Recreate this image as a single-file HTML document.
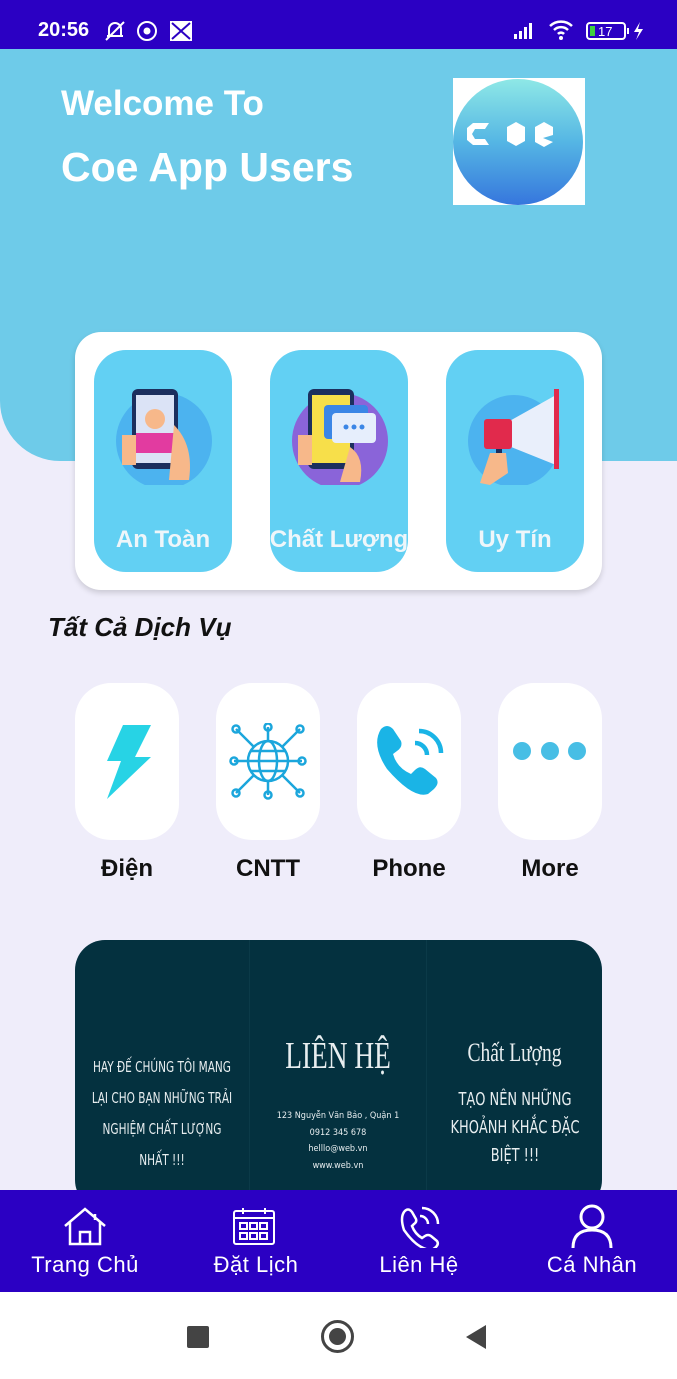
<!DOCTYPE html>
<html><head><meta charset="utf-8"><style>
*{margin:0;padding:0;box-sizing:border-box}
body{width:677px;height:1379px;background:#efedfa;font-family:"Liberation Sans","Noto Sans CJK SC",sans-serif;position:relative;overflow:hidden}
.abs{position:absolute}
.sb{left:0;top:0;width:677px;height:49px;background:#2b00c3;color:#fff}
.hdr{left:0;top:49px;width:677px;height:412px;background:#6ecbe9;border-bottom-left-radius:60px}
.card{left:75px;top:332px;width:527px;height:258px;background:#fff;border-radius:26px;box-shadow:0 3px 6px rgba(0,0,0,.15)}
.tile{top:350px;width:138px;height:222px;background:#62d0f3;border-radius:32px;color:#eef6fa;font-weight:bold;font-size:24px;text-align:center}
.tile span{position:absolute;left:-10px;right:-10px;top:176px}
.svc{top:683px;width:104px;height:157px;background:#fff;border-radius:36px}
.lbl{top:855px;width:140px;text-align:center;font-weight:bold;font-size:24px;color:#111}
.ban{left:75px;top:940px;width:527px;height:270px;background:#04313f;border-radius:30px;overflow:hidden;color:#e8eef0;font-family:"DejaVu Sans Condensed","Liberation Sans Narrow",sans-serif;text-align:center}
.nav{left:0;top:1190px;width:677px;height:102px;background:#2b00c3;color:#fff;font-size:22px}
.nav div{position:absolute;top:62px;width:170px;text-align:center;letter-spacing:.5px}
.sys{left:0;top:1292px;width:677px;height:87px;background:#fff}
</style></head><body>
<div class="abs sb">
 <div class="abs" style="left:38px;top:19px;font-size:20px;font-weight:bold">20:56</div>
 <svg class="abs" style="left:102px;top:19px" width="96" height="24"><g fill="none" stroke="#fff" stroke-width="2"><path d="M5 17h16M7 17V10a6 6 0 0 1 12 0v7M4 21L22 3"/><circle cx="45" cy="12" r="9"/></g><circle cx="45" cy="12" r="3.5" fill="#fff"/><rect x="68" y="2" width="22" height="20" fill="#fff"/><path d="M70 4l9 8-9 8M88 4l-9 8 9 8" stroke="#2b00c3" stroke-width="2" fill="none"/></svg>
 <svg class="abs" style="left:512px;top:20px" width="140" height="22"><g fill="#fff"><rect x="2" y="14" width="3" height="5"/><rect x="7" y="11" width="3" height="8"/><rect x="12" y="7" width="3" height="12"/><rect x="17" y="3" width="3" height="16"/></g><path d="M38 6a16 16 0 0 1 22 0M42 10a10 10 0 0 1 14 0M46 14a4 4 0 0 1 6 0" stroke="#fff" stroke-width="2.5" fill="none"/><circle cx="49" cy="18" r="2" fill="#fff"/><rect x="75" y="3" width="38" height="16" rx="3" stroke="#fff" stroke-width="2" fill="none"/><rect x="78" y="6" width="5" height="10" fill="#3fcf3f"/><text x="86" y="16" fill="#fff" font-size="13" font-family="Liberation Sans">17</text><rect x="115" y="8" width="2" height="6" fill="#fff"/><path d="M128 2l-6 10h5l-3 8 7-11h-5z" fill="#fff"/></svg>
</div>
<div class="abs hdr"></div>
<div class="abs" style="left:61px;top:84px;color:#fff;font-weight:bold;font-size:35px">Welcome To</div>
<div class="abs" style="left:61px;top:144px;color:#fff;font-weight:bold;font-size:41px">Coe App Users</div>
<div class="abs" style="left:453px;top:78px;width:132px;height:127px;background:#fff">
<svg width="132" height="127"><defs><linearGradient id="g" x1="0" y1="0" x2="0" y2="1"><stop offset="0" stop-color="#8ee8e6"/><stop offset=".5" stop-color="#55b6e4"/><stop offset="1" stop-color="#3676dd"/></linearGradient></defs><ellipse cx="65" cy="64" rx="65" ry="63" fill="url(#g)"/><path d="M14 50l6-5h16l-4 6h-10l-3 5 3 5h10l4 6H20l-6-5z" fill="#fff"/><path d="M54 49l9-5 9 5v14l-9 5-9-5z" fill="#fff"/><path d="M82 49l9-5 9 5v8l-10 3 10 4-9 5-9-5z" fill="#fff"/></svg></div>
<div class="abs card"></div>
<div class="abs tile" style="left:94px"><svg class="abs" style="left:20px;top:35px" width="100" height="100"><circle cx="50" cy="56" r="48" fill="#4cb3ef"/><rect x="18" y="4" width="46" height="80" rx="6" fill="#1c2f5e"/><rect x="22" y="10" width="38" height="68" fill="#dbe3f6"/><rect x="22" y="48" width="38" height="20" fill="#e23ba0"/><circle cx="41" cy="34" r="10" fill="#f7b88a"/><path d="M60 40q20 20 15 55h-20z" fill="#f7b88a"/><path d="M8 50h14v30H8z" fill="#f7b88a"/></svg><span>An Toàn</span></div>
<div class="abs tile" style="left:270px"><svg class="abs" style="left:20px;top:35px" width="100" height="100"><circle cx="50" cy="56" r="48" fill="#8a64d9"/><rect x="18" y="4" width="46" height="80" rx="6" fill="#1c2f5e"/><rect x="22" y="10" width="38" height="68" fill="#f7df4a"/><rect x="34" y="20" width="44" height="34" rx="4" fill="#3b86e6"/><rect x="42" y="28" width="44" height="30" rx="4" fill="#e6eefc"/><circle cx="56" cy="42" r="2.5" fill="#3b86e6"/><circle cx="64" cy="42" r="2.5" fill="#3b86e6"/><circle cx="72" cy="42" r="2.5" fill="#3b86e6"/><path d="M60 62q15 10 10 35h-20z" fill="#f7b88a"/><path d="M8 50h14v30H8z" fill="#f7b88a"/></svg><span>Chất Lượng</span></div>
<div class="abs tile" style="left:446px"><svg class="abs" style="left:20px;top:35px" width="100" height="100"><circle cx="48" cy="56" r="46" fill="#4cb3ef"/><path d="M40 38L90 10v70L40 60z" fill="#e9effb"/><rect x="18" y="34" width="28" height="30" rx="3" fill="#e12a4c"/><rect x="88" y="4" width="5" height="80" fill="#e12a4c"/><rect x="30" y="64" width="6" height="25" fill="#1c2f5e"/><path d="M14 98l10-30h16l2 20-18 12z" fill="#f7b88a"/></svg><span>Uy Tín</span></div>
<div class="abs" style="left:48px;top:612px;font-size:26px;font-weight:bold;font-style:italic;color:#111">Tất Cả Dịch Vụ</div>
<div class="abs svc" style="left:75px"><svg class="abs" style="left:28px;top:40px" width="50" height="78"><path d="M20 2h28L32 34h16L4 76l14-38H4z" fill="#27d3e5"/></svg></div>
<div class="abs svc" style="left:216px"><svg class="abs" style="left:12px;top:40px" width="80" height="80" fill="none" stroke="#1ba6dc" stroke-width="2.5"><circle cx="40" cy="38" r="20"/><ellipse cx="40" cy="38" rx="9" ry="20"/><path d="M20 38h40M23 28h34M23 48h34M40 18V4M40 58v14M20 38H6M60 38h14M26 24L8 6M54 24L72 6M26 52L8 70M54 52l18 18"/><circle cx="40" cy="4" r="3.5"/><circle cx="40" cy="72" r="3.5"/><circle cx="6" cy="38" r="3.5"/><circle cx="74" cy="38" r="3.5"/><circle cx="8" cy="6" r="3.5"/><circle cx="72" cy="6" r="3.5"/><circle cx="8" cy="70" r="3.5"/><circle cx="72" cy="70" r="3.5"/></svg></div>
<div class="abs svc" style="left:357px"><svg class="abs" style="left:16px;top:40px" width="72" height="72"><path d="M8 6q6-6 12 0l8 12q2 6-4 10l-4 3q4 14 18 20l4-4q5-5 10-1l11 9q4 5-2 11l-6 5Q40 76 14 46Q-2 22 8 6z" fill="#1ab4e6"/><path d="M46 8a22 22 0 0 1 22 22M42 20a12 12 0 0 1 12 12" stroke="#1ab4e6" stroke-width="4.5" fill="none"/></svg></div>
<div class="abs svc" style="left:498px"><svg class="abs" style="left:12px;top:56px" width="80" height="24" fill="#47bee5"><circle cx="12" cy="12" r="9"/><circle cx="40" cy="12" r="9"/><circle cx="67" cy="12" r="9"/></svg></div>
<div class="abs lbl" style="left:57px">Điện</div>
<div class="abs lbl" style="left:198px">CNTT</div>
<div class="abs lbl" style="left:339px">Phone</div>
<div class="abs lbl" style="left:480px">More</div>
<div class="abs ban">
 <div class="abs" style="left:174px;top:0;width:1px;height:270px;background:#0b3a48"></div>
 <div class="abs" style="left:351px;top:0;width:1px;height:270px;background:#0b3a48"></div>
 <div class="abs" style="left:-18px;top:112px;width:210px;font-size:15px;line-height:31px;transform:scaleX(.78);white-space:nowrap">HAY ĐẾ CHÚNG TÔI MANG<br>LẠI CHO BẠN NHỮNG TRẢI<br>NGHIỆM CHẤT LƯỢNG<br>NHẤT !!!</div>
 <div class="abs" style="left:175px;top:94px;width:176px;font-family:'Liberation Serif',serif;font-size:38px;transform:scaleX(.72)">LIÊN HỆ</div>
 <div class="abs" style="left:175px;top:168px;width:176px;font-size:9px;line-height:16.5px">123 Nguyễn Văn Bảo , Quận 1<br>0912 345 678<br>helllo@web.vn<br>www.web.vn</div>
 <div class="abs" style="left:352px;top:98px;width:175px;font-family:'Liberation Serif',serif;font-size:26px;transform:scaleX(.75)">Chất Lượng</div>
 <div class="abs" style="left:345px;top:146px;width:190px;font-size:18px;line-height:28px;transform:scaleX(.8)">TẠO NÊN NHỮNG KHOẢNH KHẮC ĐẶC BIỆT !!!</div>
</div>
<div class="abs nav">
 <svg class="abs" style="left:62px;top:16px" width="46" height="40" fill="none" stroke="#fff" stroke-width="2.5"><path d="M3 20L23 3l20 17M8 16v22h30V16M18 38V26h10v12M33 8v6"/></svg>
 <svg class="abs" style="left:232px;top:16px" width="44" height="40" fill="none" stroke="#fff" stroke-width="2"><rect x="2" y="5" width="40" height="33" rx="2"/><path d="M2 12h40M11 2v6M33 2v6"/><rect x="8" y="17" width="7" height="6"/><rect x="18" y="17" width="7" height="6"/><rect x="28" y="17" width="7" height="6"/><rect x="8" y="27" width="7" height="6"/><rect x="18" y="27" width="7" height="6"/><rect x="28" y="27" width="7" height="6"/></svg>
 <svg class="abs" style="left:398px;top:14px" width="46" height="44" fill="none" stroke="#fff" stroke-width="2.5"><path d="M6 8q4-5 8 0l4 7q1 3-2 5l-2 2q3 8 10 12l3-2q3-2 6 0l6 5q2 3-1 6l-4 3Q20 46 6 26Q2 14 6 8z"/><path d="M24 4a16 16 0 0 1 16 16M22 12a8 8 0 0 1 8 8"/></svg>
 <svg class="abs" style="left:570px;top:14px" width="44" height="44" fill="none" stroke="#fff" stroke-width="3"><circle cx="22" cy="13" r="11"/><path d="M3 44q0-18 19-18t19 18"/></svg>
 <div style="left:0">Trang Chủ</div>
 <div style="left:171px">Đặt Lịch</div>
 <div style="left:334px">Liên Hệ</div>
 <div style="left:507px">Cá Nhân</div>
</div>
<div class="abs sys">
 <div class="abs" style="left:187px;top:34px;width:22px;height:22px;background:#444;border-radius:2px"></div>
 <div class="abs" style="left:321px;top:28px;width:33px;height:33px;border:3px solid #444;border-radius:50%"></div>
 <div class="abs" style="left:329px;top:36px;width:17px;height:17px;background:#444;border-radius:50%"></div>
 <svg class="abs" style="left:464px;top:32px" width="24" height="26"><path d="M22 1v24L2 13z" fill="#444"/></svg>
</div>
</body></html>
